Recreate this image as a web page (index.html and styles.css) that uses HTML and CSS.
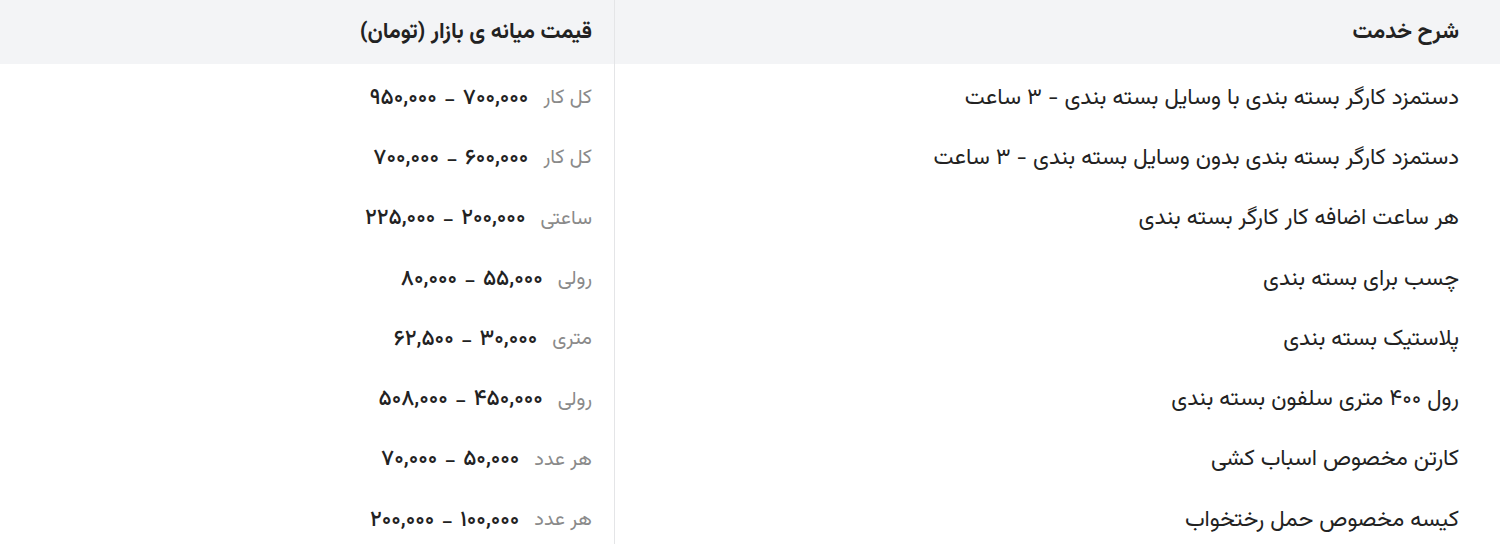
FILE: index.html
```html
<!DOCTYPE html>
<html lang="fa" dir="rtl">
<head>
<meta charset="utf-8">
<title>قیمت بسته بندی</title>
<link rel="stylesheet" href="styles.css">
</head>
<body>
<div class="table">
  <div class="row head">
    <div class="cell desc">شرح خدمت</div>
    <div class="cell price">قیمت میانه ی بازار (تومان)</div>
  </div>
  <div class="row item">
    <div class="cell desc">دستمزد کارگر بسته بندی با وسایل بسته بندی - ۳ ساعت</div>
    <div class="cell price"><span class="unit">کل کار</span><span class="num">۷۰۰,۰۰۰ <span class="dash">–</span> ۹۵۰,۰۰۰</span></div>
  </div>
  <div class="row item">
    <div class="cell desc">دستمزد کارگر بسته بندی بدون وسایل بسته بندی - ۳ ساعت</div>
    <div class="cell price"><span class="unit">کل کار</span><span class="num">۶۰۰,۰۰۰ <span class="dash">–</span> ۷۰۰,۰۰۰</span></div>
  </div>
  <div class="row item">
    <div class="cell desc">هر ساعت اضافه کار کارگر بسته بندی</div>
    <div class="cell price"><span class="unit">ساعتی</span><span class="num">۲۰۰,۰۰۰ <span class="dash">–</span> ۲۲۵,۰۰۰</span></div>
  </div>
  <div class="row item">
    <div class="cell desc">چسب برای بسته بندی</div>
    <div class="cell price"><span class="unit">رولی</span><span class="num">۵۵,۰۰۰ <span class="dash">–</span> ۸۰,۰۰۰</span></div>
  </div>
  <div class="row item">
    <div class="cell desc">پلاستیک بسته بندی</div>
    <div class="cell price"><span class="unit">متری</span><span class="num">۳۰,۰۰۰ <span class="dash">–</span> ۶۲,۵۰۰</span></div>
  </div>
  <div class="row item">
    <div class="cell desc">رول ۴۰۰ متری سلفون بسته بندی</div>
    <div class="cell price"><span class="unit">رولی</span><span class="num">۴۵۰,۰۰۰ <span class="dash">–</span> ۵۰۸,۰۰۰</span></div>
  </div>
  <div class="row item">
    <div class="cell desc">کارتن مخصوص اسباب کشی</div>
    <div class="cell price"><span class="unit">هر عدد</span><span class="num">۵۰,۰۰۰ <span class="dash">–</span> ۷۰,۰۰۰</span></div>
  </div>
  <div class="row item">
    <div class="cell desc">کیسه مخصوص حمل رختخواب</div>
    <div class="cell price"><span class="unit">هر عدد</span><span class="num">۱۰۰,۰۰۰ <span class="dash">–</span> ۲۰۰,۰۰۰</span></div>
  </div>
</div>
</body>
</html>
```

FILE: styles.css
```css
html, body {
  margin: 0;
  padding: 0;
  background: #ffffff;
}
body {
  font-family: "Vazirmatn", "Noto Sans Arabic", "DejaVu Sans", sans-serif;
  color: #222222;
  font-size: 22.5px;
}
.table {
  display: flex;
  flex-direction: column;
  width: 1500px;
}
.row {
  display: grid;
  grid-template-columns: 886px 614px;
}
.row.head {
  height: 64px;
  background: #f3f4f6;
  font-weight: 700;
  font-size: 22px;
}
.row.item {
  height: 60.3px;
}
.cell {
  display: flex;
  align-items: center;
  box-sizing: border-box;
}
.item .cell {
  padding-top: 8px;
}
.desc {
  padding-right: 41px;
  border-left: 1px solid #e4e5e7;
}
.price {
  padding-right: 22px;
  gap: 15px;
}
.unit {
  color: #8a8a8a;
  font-size: 20px;
}
.num {
  font-weight: 500;
  font-size: 22px;
  color: #222222;
}
.dash {
  display: inline-block;
  font-size: 16px;
  font-weight: 700;
  padding: 0 2px;
}
```
